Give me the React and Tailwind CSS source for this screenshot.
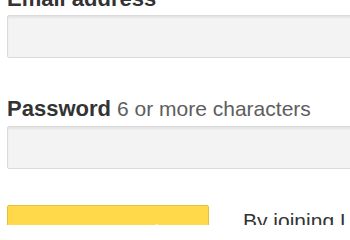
import React from "react";

function App() {
  return (
    <div className="w-[350px] h-[225px] overflow-hidden bg-white font-['Liberation_Sans',Arial,sans-serif] text-[#333]">
      <div className="pl-[7px] -mt-[14px] w-[520px]">
        <label className="block text-[22px] leading-[26px] font-bold mb-[3px]">
          Email address
        </label>
        <input
          type="email"
          className="block w-full h-[43px] bg-[#f3f3f3] border border-[#dadada] rounded-[2px] shadow-[inset_0_2px_2px_rgba(0,0,0,0.06)] outline-none"
        />
        <label className="block mt-[38px] mb-[4px] text-[22px] leading-[26px]">
          <span className="font-bold">Password</span>{" "}
          <span className="text-[21px] text-[#5e5e5e]">6 or more characters</span>
        </label>
        <input
          type="password"
          className="block w-full h-[43px] bg-[#f3f3f3] border border-[#dadada] rounded-[2px] shadow-[inset_0_2px_2px_rgba(0,0,0,0.06)] outline-none"
        />
        <div className="flex items-start gap-[34px] mt-[36px]">
          <button className="w-[202px] h-[44px] shrink-0 bg-[#ffd94a] border border-[#e3c23c] rounded-[2px] pt-[9px] text-[21px] font-bold text-[#ffeea0] leading-[26px]">
            Agree &amp; Join
          </button>
          <p className="pt-[3px] text-[21px] leading-[26px] text-[#333] whitespace-nowrap">
            By joining LinkedIn, you agree
          </p>
        </div>
      </div>
    </div>
  );
}

export default App;
